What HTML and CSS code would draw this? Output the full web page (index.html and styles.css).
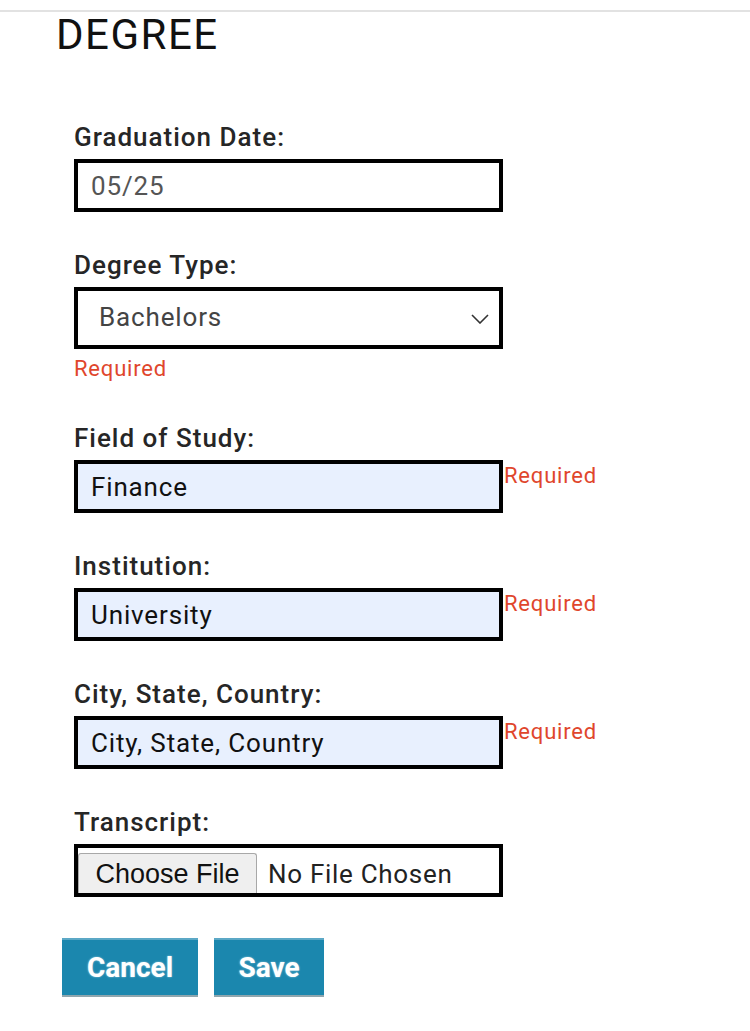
FILE: index.html
```html
<!DOCTYPE html>
<html lang="en">
<head>
<meta charset="utf-8">
<title>Degree</title>
<link rel="stylesheet" href="styles.css">
</head>
<body>
<div class="page">
  <h1 class="title">DEGREE</h1>
  <form class="form">
    <div class="field">
      <label class="label">Graduation Date:</label>
      <div class="row">
        <input class="input" type="text" value="05/25">
      </div>
    </div>
    <div class="field field-select">
      <label class="label">Degree Type:</label>
      <div class="select">
        <span class="select-value">Bachelors</span>
        <svg class="chevron" width="18" height="10" viewBox="0 0 18 10"><path d="M1 1 L9 9 L17 1" fill="none" stroke="#333" stroke-width="1.6"/></svg>
      </div>
      <div class="error error-below">Required</div>
    </div>
    <div class="field">
      <label class="label">Field of Study:</label>
      <div class="row">
        <input class="input filled" type="text" value="Finance">
        <span class="error error-side">Required</span>
      </div>
    </div>
    <div class="field">
      <label class="label">Institution:</label>
      <div class="row">
        <input class="input filled" type="text" value="University">
        <span class="error error-side">Required</span>
      </div>
    </div>
    <div class="field">
      <label class="label">City, State, Country:</label>
      <div class="row">
        <input class="input filled" type="text" value="City, State, Country">
        <span class="error error-side">Required</span>
      </div>
    </div>
    <div class="field field-last">
      <label class="label">Transcript:</label>
      <div class="file">
        <span class="file-btn">Choose File</span>
        <span class="file-name">No File Chosen</span>
      </div>
    </div>
  </form>
  <div class="actions">
    <button class="btn btn-cancel" type="button">Cancel</button>
    <button class="btn btn-save" type="button">Save</button>
  </div>
</div>
</body>
</html>
```
FILE: styles.css
```css
* { box-sizing: border-box; }
html, body { margin: 0; padding: 0; background: #fff; }
body {
  font-family: Roboto, "Liberation Sans", sans-serif;
  color: #222;
}
.page {
  margin-top: 10px;
  border-top: 2px solid #e2e2e2;
}
.title {
  margin: 2px 0 0 56px;
  font-size: 42px;
  font-weight: 400;
  line-height: 42px;
  color: #111;
  letter-spacing: 1.5px;
}
.form {
  margin: 66px 0 0 74px;
  display: flex;
  flex-direction: column;
}
.field {
  display: flex;
  flex-direction: column;
  margin-bottom: 38px;
}
.field-select { margin-bottom: 41px; }
.field-last { margin-bottom: 41px; }
.label {
  font-size: 26px;
  line-height: 30px;
  font-weight: 500;
  color: #262626;
  letter-spacing: 1px;
  margin-bottom: 7px;
}
.row {
  display: flex;
  align-items: flex-start;
}
.input {
  width: 429px;
  height: 53px;
  border: 4px solid #000;
  border-radius: 0;
  padding: 0 0 0 13px;
  margin: 0;
  font-family: Roboto, "Liberation Sans", sans-serif;
  font-size: 26px;
  letter-spacing: 0.85px;
  color: #555;
  background: #fff;
  outline: none;
}
.input.filled {
  background: #e8f0fe;
  color: #111;
}
.select {
  width: 429px;
  height: 62px;
  border: 4px solid #000;
  display: flex;
  align-items: center;
  justify-content: space-between;
  padding: 0 10px 0 21px;
}
.select-value {
  font-size: 26px;
  letter-spacing: 0.85px;
  color: #444;
  margin-top: -3px;
}
.chevron { display: block; margin-top: 2px; }
.error {
  color: #e0462c;
  font-size: 22px;
  line-height: 26px;
  letter-spacing: 0.8px;
}
.error-below { margin-top: 7px; }
.error-side { margin-left: 1px; margin-top: 3px; }
.file {
  width: 429px;
  height: 53px;
  border: 4px solid #000;
  display: flex;
  align-items: flex-end;
}
.file-btn {
  width: 179px;
  height: 40px;
  background: #efefef;
  border: 1px solid #a8a8a8;
  border-bottom: none;
  border-radius: 3px 3px 0 0;
  font-family: "Liberation Sans", Arial, sans-serif;
  font-size: 27px;
  color: #111;
  display: flex;
  align-items: center;
  justify-content: center;
  padding-top: 2px;
}
.file-name {
  margin-left: 11px;
  margin-bottom: 4px;
  font-size: 26px;
  letter-spacing: 0.7px;
  color: #222;
}
.actions {
  display: flex;
  gap: 16px;
  margin-left: 62px;
}
.btn {
  height: 59px;
  background: #1b87ae;
  border: none;
  border-top: 2px solid #5ba8c6;
  border-bottom: 2px solid #8fa6ae;
  color: #fff;
  font-family: Roboto, "Liberation Sans", sans-serif;
  font-weight: 700;
  font-size: 28px;
  padding: 0;
  text-shadow: 0 0 2px rgba(255,255,255,0.6);
}
.btn-cancel { width: 136px; }
.btn-save { width: 110px; }
```
